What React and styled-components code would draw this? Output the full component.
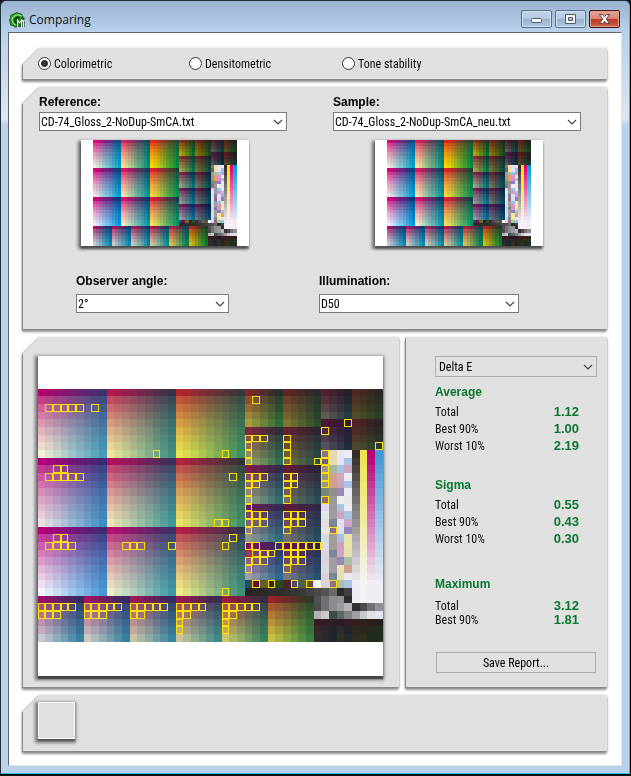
import React, { useState } from 'react';
import styled, { createGlobalStyle } from 'styled-components';

const Global = createGlobalStyle`
  * { box-sizing: border-box; }
  body { margin: 0; background: #14181c; }
`;

const UI = '"Roboto Condensed", "Roboto", sans-serif';
const STRONG = '"Liberation Sans", Arial, sans-serif';

/* ---------- test chart data ---------- */

const COLS = 45;
const ROWS = 33;
const T9 = [0, 0.25, 0.39, 0.51, 0.63, 0.74, 0.83, 0.91, 1];
const T6 = [0, 0.34, 0.54, 0.7, 0.85, 1];
const T5 = [0, 0.34, 0.57, 0.78, 1];
const T4 = [0, 0.3, 0.62, 1];

// col, row, columns, row steps, corner colours (TL TR BL BR), vivid corners
const PATCHES = [
  [0, 0, 9, T9, 'b4046e 3c3470 f2f0d6 489ab8', 'e4007c 004c84 f4ecd8 00a4c8'],
  [9, 0, 9, T9, 'b81850 343448 f0e898 409080', 'e41c58 00505c fce094 009080'],
  [18, 0, 9, T9, 'b42430 343a3c ece64c 409060', 'e82418 185030 ffe000 008c44'],
  [0, 9, 9, T9, 'b4007a 3c2c74 ecdfe0 4090c4', 'e0007c 00407c f4e8e4 009cd4'],
  [9, 9, 9, T9, 'b81060 3c3058 f0e6b0 409898', 'e01464 004460 f8e4a8 00949c'],
  [18, 9, 9, T9, 'b42440 343438 ece464 409068', 'e4202c 184434 fcdc3c 009454'],
  [0, 18, 9, T9, 'b4007c 402c74 f4f4fa 4898d8', 'dc007c 003c78 f4f0fa 0098e0'],
  [9, 18, 9, T9, 'b81070 3c3064 f0eec4 4098a8', 'dc1070 003c68 f8ecc0 0098ac'],
  [18, 18, 9, T9, 'b42048 343448 f0ec84 409080', 'e01c40 0c4048 fce458 009868'],
  [0, 27, 6, T6, '98106c 342c60 c8c8d0 3880a0', 'b40c68 004070 cccad2 0088b4'],
  [6, 27, 6, T6, 'a01464 342c60 ccc8c0 3880a0', 'b41060 004070 d0c8c4 0088b0'],
  [12, 27, 6, T6, '981858 342c5c c8c4a8 38849c', 'b41458 00406c d4c8b0 0088a4'],
  [18, 27, 6, T6, '941c50 382c50 c8c498 408888', 'b41850 004064 d4c498 008c90'],
  [24, 27, 6, T6, '981c40 382c40 ccc468 388060', 'b81c40 104450 d8bc50 008058'],
  [30, 27, 6, T6, '982428 303828 c8c040 388040', 'c4241c 184028 e0b800 008038'],
  [27, 0, 5, T5, '802828 28302c a89c38 306c38', '9c2818 183c24 c0a000 006c30'],
  [32, 0, 5, T5, '642424 282c2c 7c7430 284c2c', '782418 182c20 907400 184c24'],
  [27, 5, 5, T5, '80283c 2c3038 a0a060 307050', '9c2434 103c38 b09c48 007048'],
  [32, 5, 5, T5, '602430 2c2430 706c40 285048', '702028 14282c 786c30 084c3c'],
  [27, 10, 5, T5, '801c4c 302c4c 98a080 306c70', '981c48 003450 a49c78 007074'],
  [32, 10, 5, T5, '601c38 2c2438 707060 284c54', '701c38 0c2438 787054 004c54'],
  [27, 15, 5, T5, '701c54 342c54 909890 306c80', '901850 003058 a09888 00708c'],
  [32, 15, 5, T5, '5c1c40 302844 70706c 284c60', '6c1840 042440 747068 004860'],
  [27, 20, 5, T5, '801058 302c60 a09ca8 306890', '8c1058 002c60 a4989c 006c98'],
  [32, 20, 5, T5, '601048 30284c 787480 285070', '68104c 002048 747078 00486c'],
  [37, 0, 4, T4, '502030 24202c 605c54 243840', '5c1c2c 18242c 605850 0c3c40'],
  [41, 0, 4, T4, '502820 282828 504c28 284024', '5c2418 1c2424 584c20 184020'],
  [37, 4, 4, T4, '4c1838 2c1c34 54505c 202c3c', '541838 181c34 54505c 082c40'],
  [41, 4, 4, T4, '502024 282424 50482c 283c2c', '581c20 1c2024 504828 14382c'],
];

const RAMPS = [
  [41, '302c28', 'f0eef4', '302c28'],
  [42, 'f0e44c', 'f4f2f4', 'ffe000'],
  [43, 'b4007c', 'f2eef4', 'e0007c'],
  [44, '4098d8', 'eeeef6', '009ce0'],
];

const MIXED = [
  [37, 8, '907080 e4d8b0 e8e4f4 ecebf6'],
  [37, 9, '706080 e6dab0 e8e4f4 a8c4e4'],
  [37, 10, 'a09888 a8b8a0 a8c4e0 d0a4c4'],
  [37, 11, '989880 d0a090 d0a4c4 ecebf2'],
  [37, 12, '98987c d0a090 d0a0c0 a8c4e0'],
  [37, 13, '788878 948c88 9488b8 ecebf2'],
  [37, 14, '907068 9c98a0 eeeef0 e8e8ec'],
  [37, 15, 'dcd8ec 9c989c a8c4e0 ecebf2'],
  [37, 16, 'e4e8e4 a09ca0 d0a4c4 a8c4e0'],
  [37, 17, 'e8dce0 788898 e0e0ec d0a4c4'],
  [37, 18, 'e8e4e4 907088 e0e0ec 9488b8'],
  [37, 19, 'd8dcdc a09ca0 a8c0e0 e8e4b0'],
  [37, 20, 'dcdcdc a09c9c d0a0c0 e8e4b0'],
  [37, 21, 'dcd4d8 788898 d0a4c4 e8e0b0'],
  [37, 22, 'dcd4d8 a09ca0 9488b8 a8c0a4'],
  [37, 23, 'd8dcdc a09ca0 e8e0b0 d0a090'],
  [37, 24, 'dcd0d4 788898 e4e0b0 e8e8f4'],
  [27, 25, '284c68 601040 606028 2c2438 284828 502424 504868 506048 684c48 f4f4f8 dcd4d8 907080 a8c0a4 a8c4e0'],
  [27, 26, '242422 282826 2c2a28 302e2c 302e2c 343230 383634 3c3a38 424242 4a4a4a 545454 686868 2c2c2a 404040'],
  [36, 27, '505050 707070 8c8c90 909094 2e2e2c'],
  [36, 28, '4c4c4c 707070 8c8c90 9c9ca0 b4b4b8 34302e 4c4a4a 707072 909094'],
  [36, 29, 'b0b0b4 c8c8cc 404c48 606464 808084 a0a0a4 c8c8cc e0e0e6 e4e4f0'],
  [36, 30, '341e20 341e24 2c2026 241c28 341e20 341e1c 2c221c 302018 24221e'],
  [36, 31, '34282a 30262c 20242c 2c2c28 20242a 30281e 2c281c 242c20 242c20'],
  [36, 32, '342c2c 2c282c 1c262e 34301e 242830 302a22 302e1c 1e2c22 222c22'],
];

// marked fields per row
const MARKS = [
  [1, [28]],
  [2, [1, 2, 3, 4, 5, 7]],
  [4, [40]],
  [5, [37]],
  [6, [27, 28, 29, 32]],
  [7, [27, 32, 44]],
  [8, [15, 24, 27, 32, 37]],
  [9, [27, 32, 36, 37]],
  [10, [2, 3, 37]],
  [11, [1, 2, 3, 4, 5, 25, 27, 28, 29, 32, 33, 37]],
  [12, [27, 28, 32, 33, 37]],
  [13, [27, 32]],
  [14, [27, 32, 37]],
  [15, [27]],
  [16, [27, 28, 29, 32, 33, 34]],
  [17, [23, 24, 27, 28, 29, 32, 33, 34]],
  [18, [27, 32, 38]],
  [19, [2, 3, 25]],
  [20, [1, 2, 3, 4, 11, 12, 13, 17, 24, 27, 28, 31, 32, 33, 34, 35, 36]],
  [21, [28, 29, 30, 32, 33, 34]],
  [22, [27, 28, 29, 32, 33, 34]],
  [23, [27, 32]],
  [25, [28, 30, 33, 35, 38]],
  [26, [24]],
  [28, [0, 1, 2, 3, 4, 6, 7, 8, 9, 10, 12, 13, 14, 15, 16, 18, 19, 20, 21, 24, 25, 26, 27, 28]],
  [29, [0, 1, 2, 6, 7, 8, 12, 13, 18, 19, 24, 25]],
  [30, [18, 24]],
  [31, [18, 24]],
];
const WORST = [27, 21];

const rgb = (h) => [0, 2, 4].map((i) => parseInt(h.slice(i, i + 2), 16));
const mix = (a, b, t) => a.map((v, i) => v + (b[i] - v) * t);
const css = (c) => `rgb(${c.map((v) => Math.max(0, Math.min(255, Math.round(v)))).join(',')})`;
const boost = (c) => {
  const l = (c[0] + c[1] + c[2]) / 3;
  return c.map((v) => l + (v - l) * 1.6);
};

function buildCells(vivid) {
  const cells = [];
  const put = (c, r, color) => cells.push({ c, r, fill: css(color) });
  PATCHES.forEach(([c0, r0, n, steps, plain, strong]) => {
    const [tl, tr, bl, br] = (vivid ? strong : plain).split(' ').map(rgb);
    steps.forEach((t, r) => {
      for (let c = 0; c < n; c += 1) {
        const u = c / (n - 1);
        put(c0 + c, r0 + r, mix(mix(tl, tr, u), mix(bl, br, u), t));
      }
    });
  });
  RAMPS.forEach(([c, from, to, strong]) => {
    for (let r = 8; r < 28; r += 1) put(c, r, mix(rgb(vivid ? strong : from), rgb(to), Math.min(1, (r - 8) / 17)));
  });
  MIXED.forEach(([c0, r, list]) =>
    list.split(' ').forEach((h, i) => put(c0 + i, r, vivid ? boost(rgb(h)) : rgb(h)))
  );
  return cells;
}

const PLAIN = buildCells(false);
const VIVID = buildCells(true);

function TestChart({ width, height, vivid, marks, label }) {
  const x = (c) => Math.floor((c * width) / COLS);
  const y = (r) => Math.floor((r * height) / ROWS);
  const box = (c, r, color) => (
    <rect
      key={`m${c}-${r}`}
      x={x(c) + 0.5}
      y={y(r) + 0.5}
      width={x(c + 1) - x(c) - 1}
      height={y(r + 1) - y(r) - 1}
      fill="none"
      stroke={color}
    />
  );
  return (
    <ChartSvg viewBox={`0 0 ${width} ${height}`} width={width} height={height} role="img" aria-label={label} shapeRendering="crispEdges">
      {(vivid ? VIVID : PLAIN).map(({ c, r, fill }) => (
        <rect key={`${c}-${r}`} x={x(c)} y={y(r)} width={x(c + 1) - x(c)} height={y(r + 1) - y(r)} fill={fill} />
      ))}
      {marks && MARKS.map(([r, cols]) => cols.map((c) => box(c, r, '#ffe000')))}
      {marks && box(WORST[0], WORST[1], '#e81010')}
    </ChartSvg>
  );
}

const ChartSvg = styled.svg`
  display: block;
`;

/* ---------- window ---------- */

const Window = styled.div`
  border: 1px solid #22303a;
  border-right-color: #000;
  border-bottom-color: #000;
  border-radius: 6px 6px 0 0;
  box-shadow: inset -1px -1px #28c8e0;
  background: linear-gradient(#98b3d1 0, #b9d1ea 31px, #dbe7f4 118px, #b9d1ea 124px);
  padding: 0 8px 8px 7px;
`;

const TitleBar = styled.header`
  display: flex;
  align-items: center;
  height: 31px;
  padding: 6px 2px 0 1px;
  font: 12px/16px "Open Sans", "Noto Sans", sans-serif;
  color: #101010;
`;

const Title = styled.h1`
  margin: 0 auto 0 4px;
  font: inherit;
`;

const CaptionButtons = styled.div`
  display: flex;
  gap: 3px;
  height: 18px;
  margin-bottom: 2px;
`;

const CaptionButton = styled.button`
  display: grid;
  place-items: center;
  width: 31px;
  padding: 0;
  border: 1px solid ${(p) => (p.$close ? '#4a1018' : '#5a6f8c')};
  border-radius: 2px;
  box-shadow: inset 0 0 0 1px ${(p) => (p.$close ? '#e0a090' : '#cfdff0')};
  background: ${(p) =>
    p.$close
      ? 'linear-gradient(#e2a494 0, #d88070 50%, #b83820 51%, #cc6048 100%)'
      : 'linear-gradient(#c2d4e8 0, #b4c8e0 50%, #98b0cc 51%, #b0c8e0 100%)'};
`;

const Client = styled.main`
  display: flex;
  flex-direction: column;
  gap: 8px;
  padding: 15px 14px 14px;
  border: 1px solid #e4e4e4;
  border-top-color: #646464;
  border-left-color: #646464;
  background: #fff;
`;

const Shadow = styled.div`
  flex: ${(p) => p.$flex || 'none'};
  min-width: 0;
  filter: drop-shadow(-1px 1px 0 #8a8a8a) drop-shadow(0 2px 1px rgba(0, 0, 0, 0.38)) drop-shadow(0 0 1px rgba(0, 0, 0, 0.18));
`;

const Face = styled.section`
  height: 100%;
  min-height: ${(p) => p.$min || 0}px;
  padding: ${(p) => p.$pad || '0'};
  background: #e0e0e0;
  clip-path: ${(p) => (p.$square ? 'none' : 'polygon(16px 0, 100% 0, 100% 100%, 0 100%, 0 16px)')};
`;

function Panel({ children, flex, ...rest }) {
  return (
    <Shadow $flex={flex}>
      <Face {...rest}>{children}</Face>
    </Shadow>
  );
}

const ModeRow = styled.div`
  display: grid;
  grid-template-columns: 151px 153px 1fr;
  align-items: center;
  height: 31px;
`;

const RadioLabel = styled.label`
  display: flex;
  align-items: center;
  gap: 3px;
  font: 12px/16px ${UI};
  color: #101010;
`;

const Radio = styled.input`
  appearance: none;
  width: 13px;
  height: 13px;
  margin: 0;
  border: 1px solid #333;
  border-radius: 50%;
  background: #fff;
  &:checked {
    background: radial-gradient(circle, #333 0 3px, #fff 4px);
  }
`;

const Columns = styled.div`
  display: grid;
  grid-template-columns: ${(p) => p.$first}px 1fr;
  padding-left: ${(p) => p.$indent}px;
  margin-top: ${(p) => p.$top || 0}px;
`;

const Field = styled.div`
  display: flex;
  flex-direction: column;
  align-items: flex-start;
  width: ${(p) => p.$width}px;
`;

const FieldLabel = styled.label`
  margin-bottom: ${(p) => p.$gap}px;
  font: bold 12px/14px ${STRONG};
  color: #000;
`;

const SelectBox = styled.div`
  display: grid;
  align-items: center;
  width: 100%;
  height: ${(p) => p.$height}px;
  border: 1px solid ${(p) => (p.$flat ? '#adadad' : '#7a7a7a')};
  background: ${(p) => (p.$flat ? '#e1e1e1' : '#fff')};
`;

const NativeSelect = styled.select`
  grid-area: 1 / 1;
  appearance: none;
  width: 100%;
  height: 100%;
  padding: 0 20px 0 ${(p) => (p.$flat ? 3 : 1)}px;
  border: 0;
  outline: 0;
  background: transparent;
  font: 12px/16px ${UI};
  color: #000;
`;

const Chevron = styled.svg`
  grid-area: 1 / 1;
  justify-self: end;
  margin-right: 3px;
  pointer-events: none;
`;

function Select({ id, value, height = 19, flat, label }) {
  return (
    <SelectBox $height={height} $flat={flat}>
      <NativeSelect id={id} $flat={flat} aria-label={label}>
        <option>{value}</option>
      </NativeSelect>
      <Chevron width="10" height="6" viewBox="0 0 10 6" fill="none" stroke="#444" strokeWidth="1.2">
        <path d="M1 1l4 4 4-4" />
      </Chevron>
    </SelectBox>
  );
}

const Thumb = styled.div`
  margin: 9px 0 0 42px;
  padding: 0 12px;
  background: #fff;
  box-shadow: -2px 2px 3px 1px rgba(0, 0, 0, 0.5), 0 3px 2px rgba(0, 0, 0, 0.35);
`;

function DataField({ id, label, value, chart }) {
  return (
    <Field $width={248}>
      <FieldLabel htmlFor={id} $gap={3}>{label}</FieldLabel>
      <Select id={id} value={value} />
      <Thumb>
        <TestChart width={144} height={106} vivid label={chart} />
      </Thumb>
    </Field>
  );
}

const Results = styled.div`
  display: flex;
  gap: 7px;
`;

const Canvas = styled.div`
  width: fit-content;
  padding: 33px 0 34px;
  background: #fff;
  box-shadow: -1px 2px 3px 2px rgba(0, 0, 0, 0.5), 0 3px 1px rgba(0, 0, 0, 0.4);
`;

const Stats = styled.table`
  width: 144px;
  margin-top: ${(p) => p.$top}px;
  border-collapse: collapse;
  color: #101010;
`;

const StatsTitle = styled.caption`
  padding-bottom: ${(p) => (p.$tight ? 6 : 2)}px;
  text-align: left;
  font: bold 12px/18px ${STRONG};
  color: #087830;
`;

const StatName = styled.th`
  height: ${(p) => (p.$tight ? 14 : 17)}px;
  padding: 0;
  text-align: left;
  font: 12px/14px ${UI};
`;

const StatValue = styled.td`
  padding: 0;
  text-align: right;
  font: bold 13px/14px ${STRONG};
  color: #087830;
`;

function StatGroup({ title, rows, top, tight }) {
  return (
    <Stats $top={top}>
      <StatsTitle $tight={tight}>{title}</StatsTitle>
      <tbody>
        {rows.map(([name, value]) => (
          <tr key={name}>
            <StatName scope="row" $tight={tight}>{name}</StatName>
            <StatValue>{value}</StatValue>
          </tr>
        ))}
      </tbody>
    </Stats>
  );
}

const SaveButton = styled.button`
  display: block;
  width: 160px;
  height: 21px;
  margin: 25px 0 0 1px;
  padding: 0;
  border: 1px solid #adadad;
  background: #e1e1e1;
  font: 12px/16px ${UI};
  color: #000;
`;

const Swatch = styled.div`
  width: 37px;
  height: 37px;
  border: 1px solid #fff;
  background: #e0e0e0;
  box-shadow: -1px 2px 3px 2px rgba(0, 0, 0, 0.45), 0 2px 1px rgba(0, 0, 0, 0.3);
`;

function AppIcon() {
  return (
    <svg width="16" height="16" viewBox="0 0 16 16" aria-hidden="true">
      <path d="M8 .5l2 1.2 2.6.2.7 2 1.9 1.9-.6 2.2.4 2.8-2.3 1.6-1.4 2-2.8.2-2.4.6-2-1.4-2.5-.7-.4-2.5L.6 8l1-2.2.2-2.5 2.3-.9z" fill="#2c9c28" stroke="#0c4c10" strokeWidth=".8" />
      <path d="M12.500 4.200C9 1.600 4 3.200 3.200 7.200c-.5 3.300 1.800 5.600 4.300 5.800" fill="none" stroke="#9ce870" strokeWidth="1.100" />
      <path d="M11 6C9 4.300 6 5.400 5.800 8c-.1 2 .8 3 2 3" fill="none" stroke="#063808" strokeWidth="1.500" />
      <path d="M8.600 15V8l2 3 2-3v7M12.500 8.600h3.500M14.400 8.600V15" fill="none" stroke="#063808" strokeWidth="2.200" />
      <path d="M8.600 15V8l2 3 2-3v7M12.500 8.600h3.500M14.400 8.600V15" fill="none" stroke="#fff" strokeWidth="1.100" />
    </svg>
  );
}

const MODES = ['Colorimetric', 'Densitometric', 'Tone stability'];

export default function App() {
  const [mode, setMode] = useState(MODES[0]);
  return (
    <>
      <Global />
      <Window>
        <TitleBar>
          <AppIcon />
          <Title>Comparing</Title>
          <CaptionButtons>
            <CaptionButton aria-label="Minimize">
              <svg width="13" height="10" viewBox="0 0 13 10">
                <rect x="1.500" y="4.500" width="10" height="4" rx="1" fill="#f8f8f8" stroke="#4c5c70" />
              </svg>
            </CaptionButton>
            <CaptionButton aria-label="Maximize">
              <svg width="13" height="10" viewBox="0 0 13 10">
                <path d="M1.500.5h10v9h-10zM4.500 3.500v3h4v-3z" fillRule="evenodd" fill="#f8f8f8" stroke="#4c5c70" />
              </svg>
            </CaptionButton>
            <CaptionButton aria-label="Close" $close>
              <svg width="13" height="10" viewBox="0 0 13 10">
                <path d="M1.500.5h3l2 2.300 2-2.300h3L8.300 5l3.200 4.500h-3l-2-2.300-2 2.300h-3L4.700 5z" fill="#fff" stroke="#5c4048" />
              </svg>
            </CaptionButton>
          </CaptionButtons>
        </TitleBar>
        <Client>
          <Panel $pad="0 15px">
            <ModeRow role="radiogroup" aria-label="Comparison mode">
              {MODES.map((m) => (
                <RadioLabel key={m}>
                  <Radio type="radio" name="mode" checked={mode === m} onChange={() => setMode(m)} />
                  {m}
                </RadioLabel>
              ))}
            </ModeRow>
          </Panel>

          <Panel $pad="8px 16px 16px">
            <Columns $first={294} $indent={0}>
              <DataField id="reference" label="Reference:" value="CD-74_Gloss_2-NoDup-SmCA.txt" chart="Reference chart" />
              <DataField id="sample" label="Sample:" value="CD-74_Gloss_2-NoDup-SmCA_neu.txt" chart="Sample chart" />
            </Columns>
            <Columns $first={243} $indent={37} $top={28}>
              <Field $width={153}>
                <FieldLabel htmlFor="angle" $gap={6}>Observer angle:</FieldLabel>
                <Select id="angle" value="2°" />
              </Field>
              <Field $width={200}>
                <FieldLabel htmlFor="light" $gap={6}>Illumination:</FieldLabel>
                <Select id="light" value="D50" />
              </Field>
            </Columns>
          </Panel>

          <Results>
            <Panel flex="1" $pad="19px 15px 11px">
              <Canvas>
                <TestChart width={345} height={253} marks label="Comparison result" />
              </Canvas>
            </Panel>
            <Panel flex="0 0 201px" $square $pad="19px 10px 11px 29px">
              <Select id="metric" value="Delta E" height={21} flat label="Metric" />
              <StatGroup title="Average" top={6} rows={[['Total', '1.12'], ['Best 90%', '1.00'], ['Worst 10%', '2.19']]} />
              <StatGroup title="Sigma" top={22} rows={[['Total', '0.55'], ['Best 90%', '0.43'], ['Worst 10%', '0.30']]} />
              <StatGroup title="Maximum" top={28} tight rows={[['Total', '3.12'], ['Best 90%', '1.81']]} />
              <SaveButton>Save Report...</SaveButton>
            </Panel>
          </Results>

          <Panel $min={56} $pad="7px 15px 12px">
            <Swatch />
          </Panel>
        </Client>
      </Window>
    </>
  );
}
